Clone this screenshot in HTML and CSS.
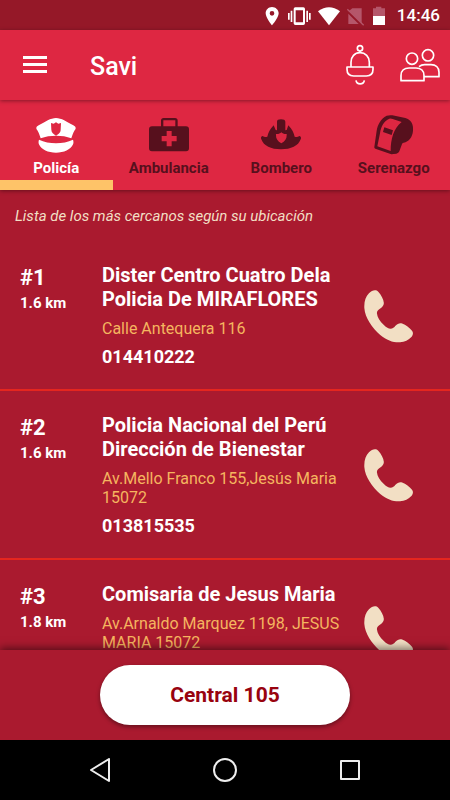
FILE: index.html
```html
<!DOCTYPE html>
<html lang="es">
<head>
  <meta charset="UTF-8">
  <meta name="viewport" content="width=device-width, initial-scale=1.0">
  <title>Savi</title>
  <link rel="stylesheet" href="styles.css">
</head>
<body>
  <svg class="sprite" aria-hidden="true">
    <symbol id="phone" viewBox="417 266 148 160">
      <path fill="currentColor" d="M450 267c-6 0-12 3-18 9-10 10-15 24-14 44 2 30 24 60 48 82 20 17 40 23 60 22 14-1 25-6 35-17 5-6 5-14 1-18-8-10-18-18-30-22-8-2-14 1-20 7-4 5-8 9-15 9-6 0-12-3-20-11-12-12-20-24-21-36 0-6 2-9 8-13 8-5 13-11 13-18-1-12-8-24-17-34-3-3-6-4-10-4z"/>
    </symbol>
  </svg>
  <div class="app">
    <div class="status-bar">
      <svg width="120" height="22" viewBox="0 0 360 66" aria-hidden="true">
        <!-- location -->
        <path fill="#fff" fill-rule="evenodd" d="M21 9c-11 0-19 9-19 19 0 14 19 36 19 36s20-22 20-36c0-10-9-19-20-19zm0 12a7 7 0 1 1 0 14 7 7 0 0 1 0-14z"/>
        <!-- vibrate -->
        <path fill="#fff" fill-rule="evenodd" d="M91 10h24q5 0 5 5v43q0 5-5 5H91q-5 0-5-5V15q0-5 5-5zm1 9v36h22V19zM77 20h5v34h-5zM69 27h5v20h-5zM124 20h5v34h-5zM132 27h5v20h-5z"/>
        <!-- wifi -->
        <path fill="#fff" d="M159 22q33-24 66 0l-33 42z"/>
        <!-- no sim -->
        <path fill="#b5566a" d="M262 13h28v45l-38-37zM250 29l31 31h-31z"/>
        <path stroke="#b5566a" stroke-width="4" d="M247 16l49 48"/>
        <!-- battery -->
        <path fill="#b5566a" d="M324 13h9V8h16v5h11v24h-36z"/>
        <path fill="#fff" d="M324 36h36v27h-36z"/>
      </svg>
      <span>14:46</span>
    </div>

    <header class="toolbar">
      <button class="icon-btn" aria-label="Menú">
        <svg width="24" height="18" viewBox="0 0 24 18"><path fill="#fff" d="M0 0h24v3H0zM0 7h24v3H0zM0 14h24v3H0z"/></svg>
      </button>
      <h1>Savi</h1>
      <button class="icon-btn" aria-label="Alertas">
        <svg width="28" height="42" viewBox="0 0 84 126" fill="none" stroke="#fff" stroke-width="5" stroke-linejoin="round">
          <circle cx="42" cy="13" r="8"/>
          <path d="M42 21v5M15 69V55c0-17 11-29 27-29s28 12 28 29v14M3 69h78v7c0 14-8 20-20 20H23C11 96 3 90 3 76zM30 109c2 14 23 14 25 0"/>
        </svg>
      </button>
      <button class="icon-btn" aria-label="Contactos">
        <svg width="40" height="34" viewBox="0 0 120 102" fill="none" stroke="#fff" stroke-width="5" stroke-linejoin="round">
          <circle cx="36" cy="32" r="17"/>
          <circle cx="84" cy="22" r="17"/>
          <path d="M3 98V83c0-15 10-23 24-23h21c14 0 24 8 24 23v15zM57 56c5-4 10-6 17-6h19c14 0 24 8 24 23v13H73"/>
        </svg>
      </button>
    </header>

    <nav class="tabs">
      <button class="tab active">
        <svg width="40" height="40" viewBox="0 0 120 120">
          <path fill="currentColor" d="M60 9C44 9 28 20 8 31c-8 4-9 10-4 15 5 8 7 16 10 24 28-10 65-10 92 0 3-8 5-16 10-24 5-5 4-11-4-15C92 20 76 9 60 9zM9 74c30 14 72 14 102 0 2 6 2 11-1 16-6 13-26 23-50 23S16 103 10 90c-3-5-3-10-1-16z"/>
          <path fill="#de2742" d="M60 22l7 4 8-2-1 20c0 9-7 13-14 18-7-5-14-9-14-18l-1-20 8 2z"/>
        </svg>
        <span>Policía</span>
      </button>
      <button class="tab">
        <svg width="40" height="40" viewBox="0 0 120 120">
          <path fill="currentColor" fill-rule="evenodd" d="M36 34V17q0-8 8-8h34q8 0 8 8v17h25q9 0 9 9v57q0 9-9 9H9q-9 0-9-9V43q0-9 9-9zm7 0h36V16H43zm10 14v15H38v16h15v15h15V79h15V63H68V48z"/>
        </svg>
        <span>Ambulancia</span>
      </button>
      <button class="tab">
        <svg width="40" height="40" viewBox="0 0 120 120">
          <path fill="currentColor" fill-rule="evenodd" d="M48 46V20q0-7 12-7t13 7v26l4-1 5-14c12 12 16 22 19 34 6 2 10 1 14-2 5 1 6 6 4 10-7 20-29 30-59 30S8 93 1 73c-2-4-1-9 4-10 4 3 8 4 14 2 3-12 7-22 19-34l6 14zm13 6c-4 4-10 6-16 5-1 13 4 22 16 28 12-6 17-15 16-28-6 1-12-1-16-5z"/>
        </svg>
        <span>Bombero</span>
      </button>
      <button class="tab">
        <svg width="40" height="40" viewBox="0 0 120 120">
          <path fill="currentColor" fill-rule="evenodd" d="M38 2Q46 0 55 1L94 9c17 5 25 19 23 38-2 20-12 32-28 36-4 1-5 3-6 7l-7 19q-2 6-9 7l-15 2-48-17Q0 100 1 96L8 47c3-18 12-36 30-45zm8 9C30 18 21 34 18 55l-8 39 40 14c0-36 9-69 33-87l-27-9q-5-2-10-1zM31 37l26 9-4 14-26-9z"/>
        </svg>
        <span>Serenazgo</span>
      </button>
    </nav>

    <main class="list">
      <p class="hint">Lista de los más cercanos según su ubicación</p>
      <article class="item">
        <div class="rank"><strong>#1</strong><span>1.6 km</span></div>
        <div class="info">
          <h2>Dister Centro Cuatro Dela Policia De MIRAFLORES</h2>
          <p class="address">Calle Antequera 116</p>
          <p class="number">014410222</p>
        </div>
        <button class="call" aria-label="Llamar al 014410222"><svg width="49" height="53"><use href="#phone"/></svg></button>
      </article>
      <article class="item">
        <div class="rank"><strong>#2</strong><span>1.6 km</span></div>
        <div class="info">
          <h2>Policia Nacional del Perú Dirección de Bienestar</h2>
          <p class="address">Av.Mello Franco 155,Jesús Maria 15072</p>
          <p class="number">013815535</p>
        </div>
        <button class="call" aria-label="Llamar al 013815535"><svg width="49" height="53"><use href="#phone"/></svg></button>
      </article>
      <article class="item">
        <div class="rank"><strong>#3</strong><span>1.8 km</span></div>
        <div class="info">
          <h2>Comisaria de Jesus Maria</h2>
          <p class="address">Av.Arnaldo Marquez 1198, JESUS MARIA 15072</p>
          <p class="number">&nbsp;</p>
        </div>
        <button class="call" aria-label="Llamar"><svg width="49" height="53"><use href="#phone"/></svg></button>
      </article>
    </main>

    <footer class="bottom">
      <button class="central">Central 105</button>
    </footer>

    <div class="nav-bar">
      <button aria-label="Atrás"><svg width="24" height="24" viewBox="0 0 24 24"><path d="M21 1v22L3 12z"/></svg></button>
      <button aria-label="Inicio"><svg width="24" height="24" viewBox="0 0 24 24"><circle cx="12" cy="12" r="11"/></svg></button>
      <button aria-label="Recientes"><svg width="24" height="24" viewBox="0 0 24 24"><rect x="3" y="3" width="18" height="18"/></svg></button>
    </div>
  </div>
</body>
</html>
```

FILE: styles.css
```css
* { box-sizing: border-box; }
body { margin: 0; font-family: Roboto, sans-serif; color: #fff; background: #aa1a2f; }
h1, h2, p { margin: 0; }
button { font-family: inherit; color: inherit; background: none; border: none; padding: 0; cursor: pointer; }
svg { display: block; }
.sprite { display: none; }
.app { display: flex; flex-direction: column; height: 100vh; }

.status-bar { display: flex; align-items: center; justify-content: flex-end; gap: 12px; height: 30px; padding: 0 10px; background: #951828; font-size: 17px; line-height: 20px; font-weight: 500; }

.toolbar { display: flex; align-items: center; height: 70px; padding: 0 10px 0 23px; gap: 26px; background: #de2742; box-shadow: 0 1px 4px rgba(0,0,0,0.4); z-index: 2; }
.toolbar h1 { flex: 1; padding: 2px 0 0 17px; font-size: 25px; font-weight: 500; }

.tabs { display: grid; grid-template-columns: repeat(4, 1fr); background: #de2742; box-shadow: 0 1px 4px rgba(0,0,0,0.4); z-index: 1; }
.tab { display: flex; flex-direction: column; align-items: center; gap: 3px; height: 90px; padding-top: 15px; border-bottom: 10px solid transparent; color: #57101d; font-size: 15px; line-height: 20px; font-weight: 700; }
.tab.active { color: #fff; border-bottom-color: #fec368; }

.list { flex: 1; min-height: 0; overflow: hidden; }
.hint { padding: 16px 15px 15px; font-size: 15px; line-height: 20px; font-style: italic; color: #f2dfc4; }
.item { display: grid; grid-template-columns: 82px 1fr 80px; padding: 22px 22px 20px 20px; border-bottom: 2px solid #e5261f; }
.rank { display: flex; flex-direction: column; padding-top: 1px; }
.rank strong { font-size: 22px; line-height: 28px; }
.rank span { font-size: 15px; line-height: 22px; font-weight: 700; }
.info h2 { font-size: 20px; line-height: 24px; font-weight: 700; }
.address { margin: 8px 0 7px; font-size: 16px; line-height: 19px; color: #f5b55f; }
.number { font-size: 18px; line-height: 24px; font-weight: 700; }
.call { align-self: center; justify-self: center; color: #f2dfc4; }

.bottom { display: flex; justify-content: center; padding: 15px; background: #aa1a2f; box-shadow: 0 -2px 8px rgba(0,0,0,0.5); z-index: 1; }
.central { width: 60%; max-width: 250px; height: 60px; border-radius: 30px; background: #fff; color: #98030f; font-size: 21px; font-weight: 700; box-shadow: 0 2px 4px rgba(0,0,0,0.4); }

.nav-bar { display: flex; justify-content: center; gap: 101px; height: 60px; background: #000; z-index: 2; }
.nav-bar svg { fill: none; stroke: #eee; stroke-width: 2; stroke-linejoin: round; }
```
